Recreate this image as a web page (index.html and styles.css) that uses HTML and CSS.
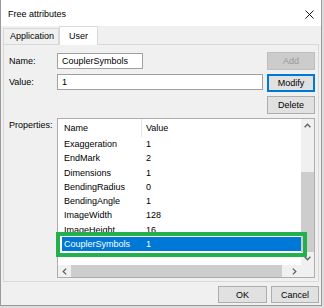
FILE: index.html
```html
<!DOCTYPE html>
<html lang="en">
<head>
  <meta charset="UTF-8">
  <title>Free attributes</title>
  <link rel="stylesheet" href="styles.css">
</head>
<body>

<div class="window">
  <div class="titlebar">
    <span class="title">Free attributes</span>
    <svg class="close" width="9" height="9" viewBox="0 0 9 9">
      <path d="M0.5 0.5L8.5 8.5M8.5 0.5L0.5 8.5" stroke="#1a1a1a" stroke-width="1" fill="none"/>
    </svg>
  </div>

  <div class="tabs">
    <div class="tab tab-app">Application</div>
    <div class="tab tab-user active">User</div>
  </div>

  <div class="panel">
    <div class="lbl">Name:</div>
    <div class="txt txt-short">CouplerSymbols</div>
    <button class="btn disabled">Add</button>

    <div class="lbl lbl-top">Value:</div>
    <div class="txt txt-long">1</div>
    <button class="btn focus">Modify</button>

    <div></div>
    <div></div>
    <button class="btn">Delete</button>

    <div class="lbl lbl-props">Properties:</div>
    <div class="list">
      <div class="view">
        <div class="header">
          <div class="hcell hname">Name</div>
          <div class="hcell">Value</div>
        </div>
        <div class="row"><div class="cell cname">Exaggeration</div><div class="cell">1</div></div>
        <div class="row"><div class="cell cname">EndMark</div><div class="cell">2</div></div>
        <div class="row"><div class="cell cname">Dimensions</div><div class="cell">1</div></div>
        <div class="row"><div class="cell cname">BendingRadius</div><div class="cell">0</div></div>
        <div class="row"><div class="cell cname">BendingAngle</div><div class="cell">1</div></div>
        <div class="row"><div class="cell cname">ImageWidth</div><div class="cell">128</div></div>
        <div class="row"><div class="cell cname">ImageHeight</div><div class="cell">16</div></div>
        <div class="row selected"><div class="cell cname">CouplerSymbols</div><div class="cell">1</div></div>
      </div>

      <div class="vscroll">
        <div class="sbtn">
          <svg width="7" height="5" viewBox="0 0 7 5"><path d="M0.6 4.2L3.5 1.2L6.4 4.2" stroke="#606060" stroke-width="1.3" fill="none"/></svg>
        </div>
        <div class="vtrack"><div class="vthumb"></div></div>
        <div class="sbtn">
          <svg width="7" height="5" viewBox="0 0 7 5"><path d="M0.6 0.8L3.5 3.8L6.4 0.8" stroke="#606060" stroke-width="1.3" fill="none"/></svg>
        </div>
      </div>

      <div class="hscroll">
        <div class="sbtn">
          <svg width="5" height="7" viewBox="0 0 5 7"><path d="M4.2 0.6L1.2 3.5L4.2 6.4" stroke="#606060" stroke-width="1.3" fill="none"/></svg>
        </div>
        <div class="htrack"><div class="hthumb"></div></div>
        <div class="sbtn">
          <svg width="5" height="7" viewBox="0 0 5 7"><path d="M0.8 0.6L3.8 3.5L0.8 6.4" stroke="#606060" stroke-width="1.3" fill="none"/></svg>
        </div>
      </div>

      <div class="corner"></div>
    </div>
  </div>

  <div class="footer">
    <button class="btn btn-ok">OK</button>
    <button class="btn btn-cancel">Cancel</button>
  </div>
</div>

</body>
</html>
```

FILE: styles.css
```css
body {
  margin: 0;
  background: #dcdcdc;
  font-family: "Liberation Sans", Arial, sans-serif;
  font-size: 9px;
  color: #000;
}
.window {
  width: 322px;
  height: 306px;
  box-sizing: border-box;
  background: #f0f0f0;
  border: 1px solid #9b9b9b;
  border-top: none;
  display: flex;
  flex-direction: column;
}
.titlebar {
  height: 26px;
  flex: none;
  box-sizing: border-box;
  background: #fff;
  display: flex;
  justify-content: space-between;
  align-items: flex-start;
  padding: 9px 7px 0 7px;
}
.title {
  line-height: 11px;
}
.close {
  margin-top: 1px;
}

/* tabs */
.tabs {
  height: 18px;
  flex: none;
  display: flex;
  align-items: flex-end;
  padding-left: 2px;
}
.tab {
  height: 16px;
  box-sizing: border-box;
  border: 1px solid #d9d9d9;
  border-bottom: none;
  background: #f0f0f0;
  line-height: 15px;
}
.tab-app {
  width: 56px;
  padding-left: 6px;
}
.tab-user {
  width: 39px;
  padding-left: 9px;
  padding-top: 2px;
}
.tab.active {
  height: 19px;
  margin-bottom: -1px;
  background: #fff;
  position: relative;
  z-index: 1;
}

/* tab page */
.panel {
  flex: none;
  height: 238px;
  margin: 0 2px;
  box-sizing: border-box;
  border: 1px solid #d9d9d9;
  padding: 7px 3px 3px 5px;
  display: grid;
  grid-template-columns: 44px 206px 48px;
  grid-template-rows: 18px 18px 18px 160px;
  column-gap: 4px;
  row-gap: 4px;
}
.lbl {
  white-space: nowrap;
  align-self: center;
}
.lbl-top {
  align-self: start;
  line-height: 16px;
}
.lbl-props {
  align-self: start;
  line-height: 14px;
}
.txt {
  height: 16px;
  box-sizing: border-box;
  background: #fff;
  border: 1px solid #a0a0a0;
  padding-left: 4px;
  line-height: 14px;
}
.txt-short {
  width: 86px;
  align-self: center;
}
.txt-long {
  align-self: start;
}

button.btn {
  font-family: inherit;
  font-size: 9px;
  color: #000;
  background: #e1e1e1;
  border: 1px solid #adadad;
  padding: 0;
  margin: 0;
  height: 18px;
  box-sizing: border-box;
}
button.disabled {
  background: #cccccc;
  border-color: #bfbfbf;
  color: #9a9a9a;
}
button.focus {
  border-color: #0078d7;
  box-shadow: inset 0 0 0 1px #0078d7;
}

/* list view */
.list {
  grid-column: 2 / 4;
  box-sizing: border-box;
  border: 1px solid #adadad;
  background: #fff;
  display: grid;
  grid-template-columns: 1fr 13px;
  grid-template-rows: 1fr 12px;
}
.header {
  height: 18px;
  display: flex;
  line-height: 18px;
}
.hcell {
  padding-left: 4px;
}
.hname {
  width: 84px;
  box-sizing: border-box;
  padding-left: 6px;
  border-right: 1px solid #e5e5e5;
}
.row {
  display: flex;
  height: 14.3px;
  line-height: 14.3px;
  margin-left: 4px;
}
.cname {
  width: 84px;
  box-sizing: border-box;
  padding-left: 2px;
}
.row.selected {
  background: #0078d7;
  color: #fff;
  position: relative;
}
.row.selected::after {
  content: "";
  position: absolute;
  top: -5px;
  left: -6px;
  right: -6px;
  bottom: -6px;
  border: 4px solid #22b14c;
  z-index: 2;
}

.vscroll {
  background: #f0f0f0;
  display: flex;
  flex-direction: column;
}
.vscroll .sbtn {
  height: 13px;
}
.sbtn {
  display: flex;
  align-items: center;
  justify-content: center;
  flex: none;
}
.vtrack {
  flex: 1;
  display: flex;
  flex-direction: column;
  justify-content: flex-end;
}
.vthumb {
  height: 80px;
  background: #cdcdcd;
}
.hscroll {
  background: #f0f0f0;
  display: flex;
}
.hscroll .sbtn {
  width: 13px;
}
.htrack {
  flex: 1;
  display: flex;
}
.hthumb {
  width: 211px;
  background: #cdcdcd;
}
.corner {
  background: #f0f0f0;
}

/* bottom buttons */
.footer {
  display: flex;
  justify-content: flex-end;
  gap: 4px;
  padding: 4px 2px 0 0;
}
.footer button.btn {
  height: 17px;
}
.btn-ok {
  width: 49px;
}
.btn-cancel {
  width: 48px;
}
```
